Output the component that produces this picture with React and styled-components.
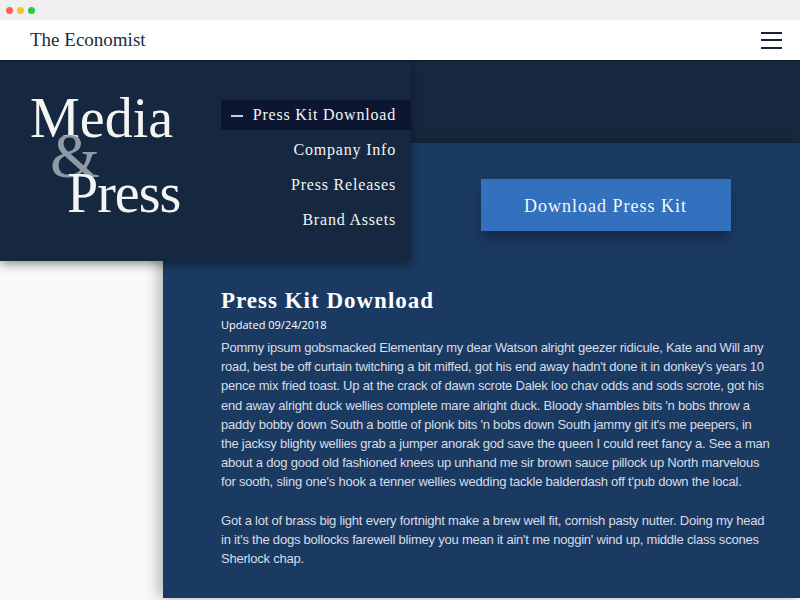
import styled, { createGlobalStyle } from 'styled-components';

const GlobalStyle = createGlobalStyle`
  html, body {
    margin: 0;
    padding: 0;
  }
  body {
    background: #fafafa;
    font-family: "Liberation Sans", Arial, sans-serif;
  }
`;

const Window = styled.div`
  width: 800px;
  height: 600px;
  overflow: hidden;
  display: flex;
  flex-direction: column;
  background: #fafafa;
`;

const Chrome = styled.div`
  height: 20px;
  flex: none;
  background: #efeef1;
  display: flex;
  align-items: center;
  gap: 4px;
  padding-left: 6px;
`;

const Dot = styled.span`
  width: 7px;
  height: 7px;
  border-radius: 50%;
  background: ${(p) => p.color};
`;

const Header = styled.header`
  height: 40px;
  flex: none;
  background: #fff;
  display: flex;
  align-items: center;
  justify-content: space-between;
  padding: 0 18px 0 30px;
  box-shadow: 0 1px 1px rgba(0, 0, 0, 0.35);
  position: relative;
  z-index: 3;
`;

const Brand = styled.div`
  font-family: "Liberation Serif", serif;
  font-size: 19px;
  color: #1b2b42;
`;

const Burger = styled.button`
  width: 21px;
  height: 17px;
  display: flex;
  flex-direction: column;
  justify-content: space-between;
  padding: 0;
  border: 0;
  background: none;

  span {
    height: 2px;
    background: #15263c;
  }
`;

const Stage = styled.main`
  position: relative;
  flex: 1;
  display: flex;
  flex-direction: column;
`;

const Band = styled.div`
  height: 83px;
  flex: none;
  background: #17293f;
`;

const Body = styled.div`
  height: 455px;
  display: flex;
`;

const Gutter = styled.div`
  width: 163px;
  flex: none;
  background: #fafafa;
`;

const Panel = styled.section`
  flex: 1;
  background: #1b3a62;
  box-shadow: -4px 0 14px rgba(0, 0, 0, 0.3);
  padding: 36px 0 0 58px;
`;

const ButtonRow = styled.div`
  display: flex;
  justify-content: center;
  padding-left: 190px;
`;

const DownloadButton = styled.button`
  width: 250px;
  height: 52px;
  border: 0;
  padding-top: 3px;
  background: #3371be;
  color: #f4f6fa;
  font-family: "Liberation Serif", serif;
  font-size: 18px;
  letter-spacing: 1px;
  box-shadow: 0 10px 14px -2px rgba(0, 0, 0, 0.3);
`;

const Heading = styled.h2`
  margin: 56px 0 0;
  font-family: "Liberation Serif", serif;
  font-size: 23px;
  line-height: 28px;
  font-weight: bold;
  letter-spacing: 1px;
  color: #fff;
`;

const Updated = styled.div`
  margin-top: 2px;
  font-family: "Open Sans", sans-serif;
  font-size: 11px;
  line-height: 16px;
  font-weight: 500;
  color: #fff;
`;

const Copy = styled.div`
  margin-top: 5px;
  max-width: 550px;

  p {
    margin: 0 0 19px;
    font-size: 13px;
    line-height: 19.2px;
    letter-spacing: -0.22px;
    color: #d7dde6;
  }
`;

const MenuCard = styled.div`
  position: absolute;
  top: 0;
  left: 0;
  width: 411px;
  height: 201px;
  background: #15283f;
  box-shadow: 0 3px 10px rgba(0, 0, 0, 0.45);
  z-index: 2;
  display: flex;
  justify-content: space-between;
`;

const Title = styled.h1`
  margin: 0;
  padding: 30px 0 0 30px;
  font-family: "Liberation Serif", serif;
  font-weight: normal;
  color: #f4f4f4;
`;

const TitleLine = styled.span`
  display: block;
  font-size: ${(p) => p.size || 56}px;
  line-height: ${(p) => p.lh || 56}px;
  padding-left: ${(p) => p.indent || 0}px;
  letter-spacing: ${(p) => p.spacing || 0}px;
  color: ${(p) => p.color || 'inherit'};
`;

const Nav = styled.nav`
  width: 190px;
  padding-top: 40px;
  display: flex;
  flex-direction: column;
  gap: 5px;
`;

const NavItem = styled.a`
  height: 30px;
  display: flex;
  align-items: center;
  justify-content: flex-end;
  gap: 10px;
  padding-right: 15px;
  font-family: "Liberation Serif", serif;
  font-size: 16px;
  letter-spacing: 0.8px;
  color: #f4f4f4;
  background: ${(p) => (p.active ? '#0c1630' : 'transparent')};
`;

const Dash = styled.span`
  width: 12px;
  height: 2px;
  margin-top: 1px;
  background: #c9ced6;
`;

const navItems = ['Press Kit Download', 'Company Info', 'Press Releases', 'Brand Assets'];

const App = () => (
  <Window>
    <GlobalStyle />
    <Chrome>
      <Dot color="#fe5f57" />
      <Dot color="#febc2e" />
      <Dot color="#28c840" />
    </Chrome>
    <Header>
      <Brand>The Economist</Brand>
      <Burger aria-label="Menu">
        <span />
        <span />
        <span />
      </Burger>
    </Header>
    <Stage>
      <Band />
      <Body>
        <Gutter />
        <Panel>
          <ButtonRow>
            <DownloadButton>Download Press Kit</DownloadButton>
          </ButtonRow>
          <Heading>Press Kit Download</Heading>
          <Updated>Updated 09/24/2018</Updated>
          <Copy>
            <p>
              Pommy ipsum gobsmacked Elementary my dear Watson alright geezer ridicule, Kate and Will any
              road, best be off curtain twitching a bit miffed, got his end away hadn't done it in donkey's years 10
              pence mix fried toast. Up at the crack of dawn scrote Dalek loo chav odds and sods scrote, got his
              end away alright duck wellies complete mare alright duck. Bloody shambles bits 'n bobs throw a
              paddy bobby down South a bottle of plonk bits 'n bobs down South jammy git it's me peepers, in
              the jacksy blighty wellies grab a jumper anorak god save the queen I could reet fancy a. See a man
              about a dog good old fashioned knees up unhand me sir brown sauce pillock up North marvelous
              for sooth, sling one's hook a tenner wellies wedding tackle balderdash off t'pub down the local.
            </p>
            <p>
              Got a lot of brass big light every fortnight make a brew well fit, cornish pasty nutter. Doing my head
              in it's the dogs bollocks farewell blimey you mean it ain't me noggin' wind up, middle class scones
              Sherlock chap.
            </p>
          </Copy>
        </Panel>
      </Body>
      <MenuCard>
        <Title>
          <TitleLine>Media</TitleLine>
          <TitleLine size={64} lh={19} indent={20} color="#8f9aa7">&amp;</TitleLine>
          <TitleLine indent={37} spacing={-1}>Press</TitleLine>
        </Title>
        <Nav>
          {navItems.map((item, i) => (
            <NavItem key={item} active={i === 0}>
              {i === 0 && <Dash />}
              {item}
            </NavItem>
          ))}
        </Nav>
      </MenuCard>
    </Stage>
  </Window>
);

export default App;
